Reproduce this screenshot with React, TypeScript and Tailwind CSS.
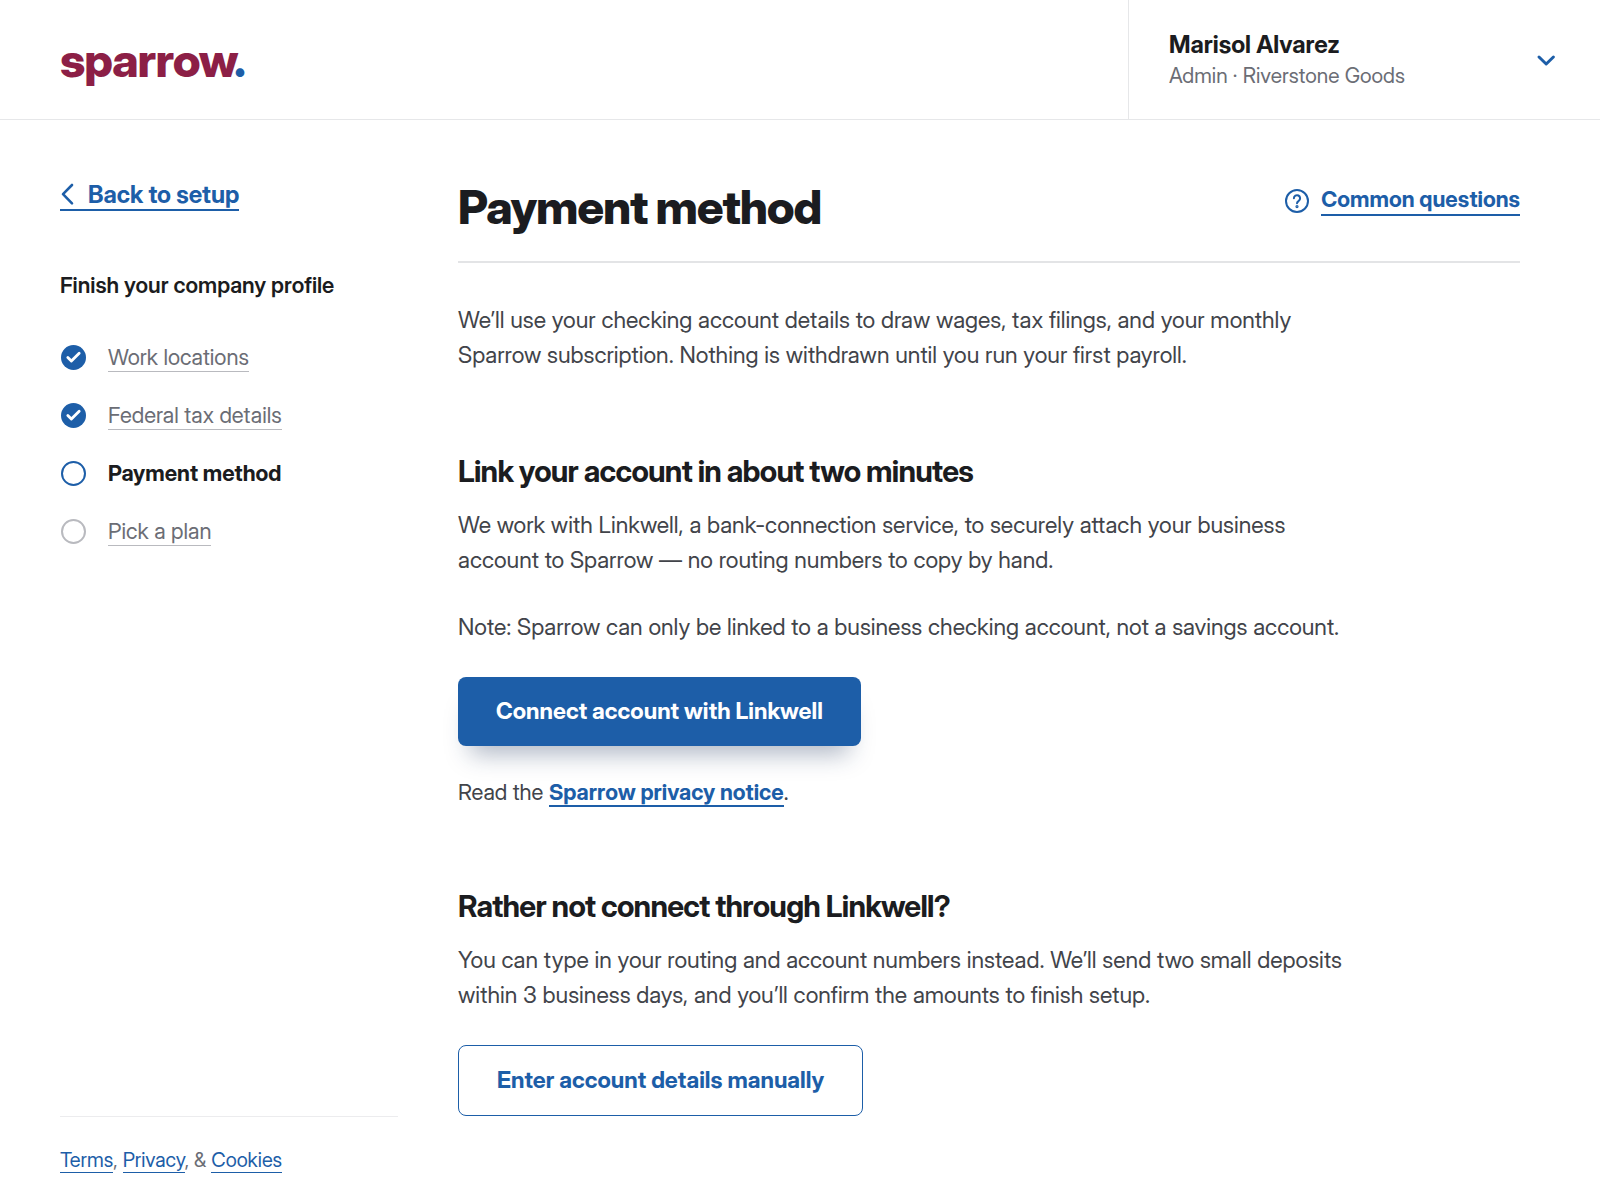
import { Check } from 'lucide-react'

const steps = [
  { label: 'Work locations', state: 'done' },
  { label: 'Federal tax details', state: 'done' },
  { label: 'Payment method', state: 'current' },
  { label: 'Pick a plan', state: 'todo' },
]

const footerLink = 'text-[#1d5ea8] border-b border-[#1d5ea8]'
const boldLink = 'font-bold text-[#1d5ea8] border-b-2 border-[#1d5ea8]'
const sectionTitle = 'text-[30px] leading-9 font-bold tracking-tight text-[#1b1c20]'
const bodyText = 'max-w-[900px] text-[23px] leading-[35px] text-[#42444a]'
const button = 'mt-8 rounded-lg px-[38px] py-[18px] text-[23px] leading-[33px] font-bold'

function StepIcon({ state }: { state: string }) {
  if (state === 'done') {
    return (
      <span className="flex size-[25px] items-center justify-center rounded-full bg-[#1d5ea8] text-white">
        <Check size={17} strokeWidth={4} />
      </span>
    )
  }
  if (state === 'current') {
    return <span className="size-[25px] rounded-full border-2 border-[#1d5ea8]" />
  }
  return <span className="size-[25px] rounded-full border-2 border-[#b9babf]" />
}

function Header() {
  return (
    <header className="flex h-[120px] items-stretch justify-between border-b border-[#e6e7e9]">
      <a href="#" className="flex items-center pl-[60px] text-[47px] leading-none font-extrabold tracking-tight text-[#8c1f46]">
        <span>
          sparrow<span className="text-[#1d5ea8]">.</span>
        </span>
      </a>
      <button
        type="button"
        aria-haspopup="menu"
        className="flex w-[472px] items-center justify-between border-l border-[#e6e7e9] pr-11 pl-10 text-left"
      >
        <span className="flex flex-col">
          <span className="text-2xl leading-8 font-bold text-[#1b1c20]">Marisol Alvarez</span>
          <span className="text-[21px] leading-[30px] text-[#6b6d75]">Admin · Riverstone Goods</span>
        </span>
        <svg width="20" height="14" viewBox="0 0 20 14" fill="none" className="text-[#1d5ea8]">
          <path d="M3 4 10.200 11l7.200-7" stroke="currentColor" strokeWidth="3" strokeLinecap="round" strokeLinejoin="round" />
        </svg>
      </button>
    </header>
  )
}

function Sidebar() {
  return (
    <aside className="flex w-[338px] shrink-0 flex-col">
      <a href="#" className={`flex items-center gap-4 self-start text-2xl leading-[29px] ${boldLink}`}>
        <svg width="12" height="22" viewBox="0 0 12 22" fill="none" overflow="visible">
          <path d="M12 1 3 10.200l9 9.200" stroke="currentColor" strokeWidth="2.600" strokeLinecap="round" strokeLinejoin="round" />
        </svg>
        Back to setup
      </a>

      <h2 className="mt-[58px] text-[22px] leading-8 font-semibold text-[#1b1c20]">Finish your company profile</h2>
      <ol className="mt-10 flex flex-col gap-[26px]">
        {steps.map((s) => (
          <li key={s.label} className="flex h-8 items-center gap-[22px] pl-px">
            <StepIcon state={s.state} />
            {s.state === 'current' ? (
              <span aria-current="step" className="text-[22px] leading-7 font-bold text-[#1b1c20]">
                {s.label}
              </span>
            ) : (
              <a href="#" className="border-b border-[#b9babf] text-[22px] leading-7 text-[#6b6d75]">
                {s.label}
              </a>
            )}
          </li>
        ))}
      </ol>

      <footer className="mt-auto border-t border-[#ececee] pt-8 text-xl leading-[22px] text-[#6b6d75]">
        <a href="#" className={footerLink}>Terms</a>,{' '}
        <a href="#" className={footerLink}>Privacy</a>, &amp;{' '}
        <a href="#" className={footerLink}>Cookies</a>
      </footer>
    </aside>
  )
}

export default function App() {
  return (
    <div className="flex min-h-screen flex-col bg-white font-['Inter_Display','Inter',sans-serif]">
      <Header />

      <div className="flex grow gap-[60px] pt-[60px] pr-20 pb-[29px] pl-[60px]">
        <Sidebar />

        <main className="grow">
          <div className="flex items-start justify-between border-b-2 border-[#e3e4e6] pb-[27px]">
            <h1 className="text-[47px] leading-[54px] font-extrabold tracking-tight text-[#1b1c20]">Payment method</h1>
            <a href="#" className="mt-[5px] flex items-center gap-3 text-[22px] text-[#1d5ea8]">
              <svg width="24" height="24" viewBox="0 0 24 24" fill="none" stroke="currentColor" strokeWidth="2" strokeLinecap="round">
                <circle cx="12" cy="12" r="11" />
                <path d="M8.900 9.300a3.100 3.100 0 1 1 4.900 2.500c-1.100.8-1.800 1.300-1.800 2.400" />
                <circle cx="12" cy="17.600" r=".6" />
              </svg>
              <span className={`leading-[29px] ${boldLink}`}>Common questions</span>
            </a>
          </div>

          <p className={`mt-10 ${bodyText}`}>
            We’ll use your checking account details to draw wages, tax filings, and your monthly Sparrow subscription.
            Nothing is withdrawn until you run your first payroll.
          </p>

          <section className="mt-20">
            <h2 className={sectionTitle}>Link your account in about two minutes</h2>
            <p className={`mt-[19px] ${bodyText}`}>
              We work with Linkwell, a bank-connection service, to securely attach your business account to Sparrow — no
              routing numbers to copy by hand.
            </p>
            <p className={`mt-8 ${bodyText}`}>
              Note: Sparrow can only be linked to a business checking account, not a savings account.
            </p>
            <button type="button" className={`${button} bg-[#1d5ea8] text-white shadow-[0_20px_24px_-12px_rgba(27,50,90,0.35)]`}>
              Connect account with Linkwell
            </button>
            <p className="mt-[30px] text-[22px] leading-8 text-[#42444a]">
              Read the <a href="#" className={boldLink}>Sparrow privacy notice</a>.
            </p>
          </section>

          <section className="mt-20">
            <h2 className={sectionTitle}>Rather not connect through Linkwell?</h2>
            <p className={`mt-[19px] ${bodyText}`}>
              You can type in your routing and account numbers instead. We’ll send two small deposits within 3 business
              days, and you’ll confirm the amounts to finish setup.
            </p>
            <button type="button" className={`${button} border border-[#1d5ea8] text-[#1d5ea8]`}>
              Enter account details manually
            </button>
          </section>
        </main>
      </div>
    </div>
  )
}
